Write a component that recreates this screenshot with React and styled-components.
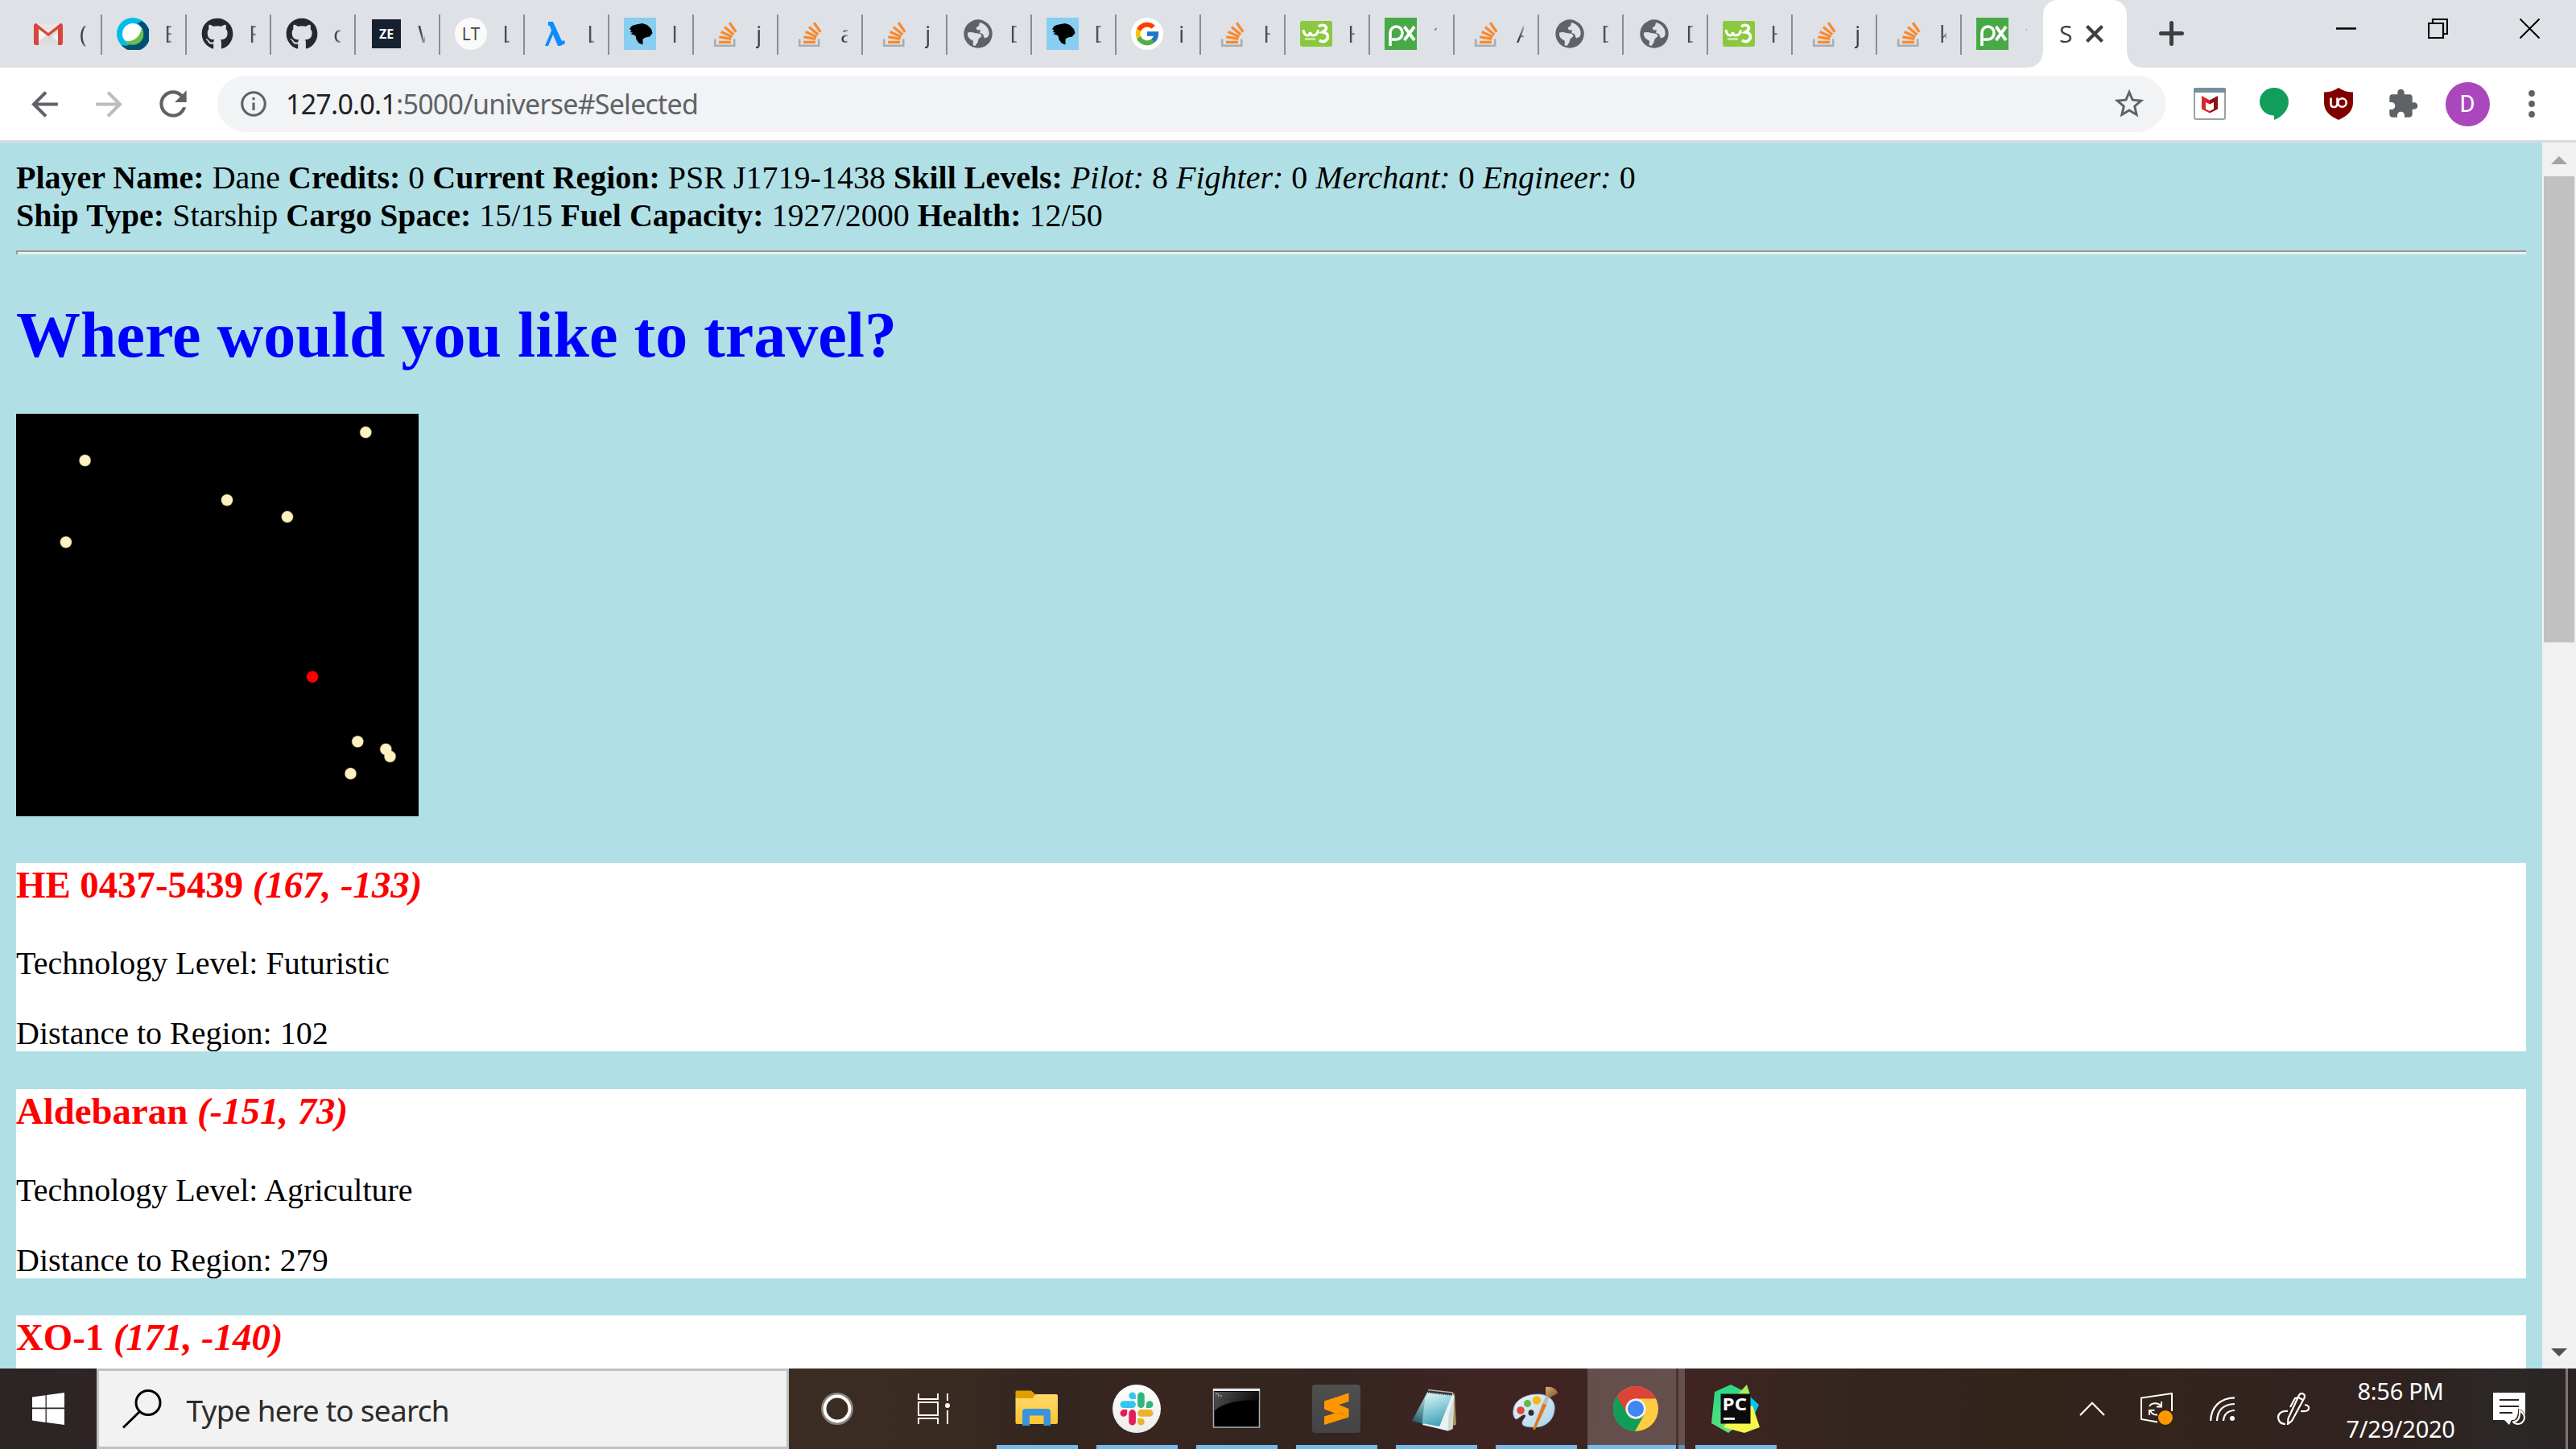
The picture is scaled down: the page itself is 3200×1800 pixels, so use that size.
import React from "react";
import styled, { createGlobalStyle, css } from "styled-components";
import { FaGithub } from "react-icons/fa";
import { FcGoogle } from "react-icons/fc";

const UI_FONT = '"Noto Sans", "Open Sans", sans-serif';
const SERIF = '"Liberation Serif", "Times New Roman", serif';

const GlobalStyle = createGlobalStyle`
  html, body { margin: 0; padding: 0; background: #b0e0e6; }
  body { overflow: hidden; }
  *, *::before, *::after { box-sizing: border-box; }
  svg { display: block; flex: none; }
`;

const Desktop = styled.div`
  display: flex;
  flex-direction: column;
  width: 3200px;
  height: 1800px;
  overflow: hidden;
  font-family: ${UI_FONT};
`;

/* ---------- Tab strip ---------- */

const TabStrip = styled.div`
  display: flex;
  flex: none;
  height: 84px;
  padding-left: 22px;
  background: #dee1e6;
`;

const Tab = styled.div`
  display: flex;
  flex: none;
  align-items: center;
  gap: 19px;
  width: 105px;
  height: 50px;
  margin-top: 18px;
  padding: 0 0 2px 18px;
  border-right: 2px solid ${(p) => (p.$last ? "transparent" : "#8a8d91")};
`;

const TabLabel = styled.span`
  width: ${(p) => p.$clip}px;
  overflow: hidden;
  white-space: nowrap;
  font-family: "Open Sans", sans-serif;
  font-size: 30px;
  line-height: 44px;
  color: #3c4043;
  mask-image: linear-gradient(90deg, #000 35%, rgba(0, 0, 0, 0.35));
`;

const Flare = styled.div`
  flex: none;
  width: 18px;
  height: 20px;
  margin-top: 64px;
  margin-left: ${(p) => (p.$side === "left" ? "-22px" : "0")};
  background: radial-gradient(
    ellipse 18px 20px at ${(p) => (p.$side === "left" ? "0 0" : "100% 0")},
    transparent 97%,
    #fff 100%
  );
`;

const ActiveTab = styled.div`
  display: flex;
  flex: none;
  align-items: center;
  gap: 18px;
  width: 104px;
  height: 84px;
  padding: 0 0 1px 20px;
  border-radius: 18px 18px 0 0;
  background: #fff;
  font-size: 30px;
  color: #3c4043;
`;

const ActiveLabel = styled.span`
  width: 15px;
  font-family: "Open Sans", sans-serif;
  line-height: 44px;
`;

const NewTab = styled.div`
  display: flex;
  align-items: center;
  margin-left: 22px;
  padding-bottom: 1px;
`;

const WindowControls = styled.div`
  display: flex;
  margin-left: auto;
`;

const WindowButton = styled.div`
  display: flex;
  align-items: center;
  justify-content: center;
  width: 114px;
  height: 71px;
  padding-right: 1px;
`;

/* ---------- Favicons with lettering ---------- */

const LetterIcon = styled.span`
  display: flex;
  flex: none;
  align-items: center;
  justify-content: center;
  width: 40px;
  height: 40px;
  line-height: 1;
  ${(p) =>
    p.$kind === "ze" &&
    css`
      width: 36px;
      height: 36px;
      margin: 0 2px;
      background: #17202e;
      color: #fff;
      font: 700 16px/1 "Open Sans", sans-serif;
    `}
  ${(p) =>
    p.$kind === "lt" &&
    css`
      border-radius: 50%;
      background: #fafafa;
      color: #444;
      font: 400 21px/1 "Open Sans", sans-serif;
    `}
`;

/* ---------- Toolbar ---------- */

const Toolbar = styled.div`
  display: flex;
  flex: none;
  align-items: center;
  height: 93px;
  padding: 0 15px;
  background: #fff;
  border-bottom: 3px solid #dadce0;
`;

const ToolButton = styled.div`
  display: flex;
  flex: none;
  align-items: center;
  justify-content: center;
  width: 80px;
  height: 80px;
`;

const Omnibox = styled.div`
  display: flex;
  flex: none;
  align-items: center;
  width: 2420px;
  height: 70px;
  margin: 0 15px;
  padding: 0 23px 0 26px;
  border-radius: 35px;
  background: #f1f3f4;
`;

const Url = styled.span`
  flex: 1;
  margin-left: 21px;
  font-size: 34px;
  line-height: 48px;
  letter-spacing: -0.77px;
  color: #5f6368;
  white-space: nowrap;
`;

const Host = styled.span`
  color: #202124;
`;

const Avatar = styled.span`
  display: flex;
  align-items: center;
  justify-content: center;
  width: 55px;
  height: 55px;
  border-radius: 50%;
  background: #ab47bc;
  color: #fff;
  font: 400 29px/1 Roboto, sans-serif;
`;

/* ---------- Web page ---------- */

const Content = styled.div`
  display: flex;
  flex: none;
  height: 1523px;
  overflow: hidden;
`;

const Page = styled.main`
  flex: 1;
  padding: 20px;
  overflow: hidden;
  background: #b0e0e6;
  color: #000;
  font-family: ${SERIF};
  font-size: 40px;
  line-height: 47px;
`;

const Rule = styled.hr`
  height: 5px;
  margin: 20px 0 0;
  border: 0;
  border-top: 2px solid #9a9a9a;
  border-left: 2px solid #9a9a9a;
  background: #eeeeee;
`;

const Title = styled.h1`
  margin: 54.6px 0 52.8px;
  font-size: 80px;
  line-height: 91px;
  font-weight: 700;
  color: #0000ff;
`;

const MapRow = styled.div`
  height: 510.4px;
`;

const Region = styled.section`
  height: 234.5px;
  margin-top: 46.9px;
  background: #fff;
`;

const RegionName = styled.h3`
  margin: 0 0 46.8px;
  padding-top: 1px;
  font-size: 46.8px;
  line-height: 53.7px;
  font-weight: 700;
  color: #ff0000;
`;

const Fact = styled.p`
  margin: 0;
  & + & {
    margin-top: 40px;
  }
`;

const Scrollbar = styled.div`
  display: flex;
  flex: none;
  flex-direction: column;
  align-items: center;
  width: 42px;
  background: #f1f1f1;
`;

const ScrollArrow = styled.div`
  width: 0;
  height: 0;
  border-left: 10.5px solid transparent;
  border-right: 10.5px solid transparent;
  ${(p) =>
    p.$dir === "up"
      ? css`
          margin: 17px 0 15px;
          border-bottom: 10px solid #a3a3a3;
        `
      : css`
          margin: auto 0 15px;
          border-top: 10px solid #505050;
        `}
`;

const Thumb = styled.div`
  width: 38px;
  height: 579px;
  background: #c1c1c1;
`;

/* ---------- Taskbar ---------- */

const Taskbar = styled.div`
  display: flex;
  flex: none;
  height: 100px;
  background: linear-gradient(
    90deg,
    #2c2523 0,
    #2e2425 120px,
    #3b2d23 980px,
    #3a2b22 1180px,
    #33261f 1300px,
    #38261f 1430px,
    #33251f 1650px,
    #3f2423 1830px,
    #3f2421 1950px,
    #3e2521 2130px,
    #34261f 2300px,
    #30241b 2520px,
    #33241d 2700px,
    #2f2220 2980px,
    #2b2827 3120px,
    #2a2324 3200px
  );
`;

const StartButton = styled.div`
  display: flex;
  align-items: center;
  justify-content: center;
  width: 120px;
`;

const SearchBox = styled.div`
  display: flex;
  align-items: center;
  width: 860px;
  padding-left: 28px;
  border: 3px solid #c1c1c1;
  background: #f2f2f2;
  color: #2b2b2b;
`;

const SearchText = styled.span`
  margin-left: 30.5px;
  padding-top: 3px;
  font-size: 37px;
  line-height: 50px;
  letter-spacing: -0.75px;
  white-space: nowrap;
`;

const ShellButton = styled.div`
  display: flex;
  align-items: center;
  justify-content: center;
  width: 120px;
`;

const AppList = styled.div`
  display: flex;
  margin-left: 6px;
`;

const AppButton = styled.div`
  display: flex;
  flex-direction: column;
  align-items: center;
  width: 124px;
  ${(p) =>
    p.$active &&
    css`
      width: 110px;
      margin-left: 2px;
      padding-left: 10px;
      background: rgba(255, 255, 255, 0.2);
      box-shadow: inset 0 -5px 0 #76b9ed;
    `}
`;

const AppIcon = styled.div`
  display: flex;
  flex: none;
  align-items: center;
  justify-content: center;
  width: 100px;
  height: 95px;
  padding-top: 5px;
`;

const Underline = styled.div`
  width: 101px;
  height: 5px;
  background: #76b9ed;
`;

const StackedWindow = styled.div`
  width: 11px;
  margin-right: 1px;
  border-left: 3px solid rgba(255, 255, 255, 0.06);
  background: rgba(255, 255, 255, 0.2);
  background-clip: padding-box;
  box-shadow: inset 0 -5px 0 #5b93bf;
`;

const SublimeTile = styled.div`
  display: flex;
  align-items: center;
  justify-content: center;
  width: 60px;
  height: 60px;
  border-radius: 4px;
  background: linear-gradient(#4f4f4f, #434343);
`;

const Tray = styled.div`
  display: flex;
  margin-left: auto;
  color: #fff;
`;

const TrayCell = styled.div`
  display: flex;
  align-items: center;
  justify-content: center;
  width: ${(p) => p.$w}px;
`;

const Clock = styled.div`
  width: 174px;
  padding-top: 5px;
  text-align: center;
  font-size: 29px;
  line-height: 46.7px;
  letter-spacing: -0.3px;
`;

const ShowDesktop = styled.div`
  width: 13px;
  margin-left: 22px;
  border-left: 3px solid #7d7674;
`;

/* ---------- Drawings ---------- */

const Glyph = ({ d, size, color = "#5f6368" }) => (
  <svg width={size} height={size} viewBox="0 0 24 24" fill={color}>
    <path d={d} />
  </svg>
);

const BACK = "M20 11H7.83l5.59-5.59L12 4l-8 8 8 8 1.41-1.41L7.83 13H20v-2z";
const FORWARD = "M12 4l-1.41 1.41L16.17 11H4v2h12.17l-5.58 5.59L12 20l8-8z";
const RELOAD =
  "M17.65 6.35C16.2 4.9 14.21 4 12 4c-4.42 0-7.99 3.58-7.99 8s3.57 8 7.99 8c3.73 0 6.84-2.55 7.73-6h-2.08c-.82 2.33-3.04 4-5.65 4-3.31 0-6-2.69-6-6s2.69-6 6-6c1.66 0 3.14.69 4.22 1.78L13 11h7V4l-2.35 2.35z";
const INFO =
  "M11 7h2v2h-2zm0 4h2v6h-2zm1-9C6.48 2 2 6.48 2 12s4.48 10 10 10 10-4.48 10-10S17.52 2 12 2zm0 18c-4.41 0-8-3.59-8-8s3.59-8 8-8 8 3.59 8 8-3.59 8-8 8z";
const STAR =
  "M22 9.24l-7.19-.62L12 2 9.19 8.63 2 9.24l5.46 4.73L5.82 21 12 17.27 18.18 21l-1.63-7.03L22 9.24zM12 15.4l-3.76 2.27 1-4.28-3.32-2.88 4.38-.38L12 6.1l1.71 4.04 4.38.38-3.32 2.88 1 4.28L12 15.4z";
const PUZZLE =
  "M20.5 11H19V7c0-1.1-.9-2-2-2h-4V3.5C13 2.12 11.88 1 10.5 1S8 2.12 8 3.5V5H4c-1.1 0-1.99.9-1.99 2v3.8H3.5c1.49 0 2.7 1.21 2.7 2.7s-1.21 2.7-2.7 2.7H2V20c0 1.1.9 2 2 2h3.8v-1.5c0-1.49 1.21-2.7 2.7-2.7 1.49 0 2.7 1.21 2.7 2.7V22H17c1.1 0 2-.9 2-2v-4h1.5c1.38 0 2.5-1.12 2.5-2.5S21.88 11 20.5 11z";

const Fav = ({ children }) => (
  <svg width="40" height="40" viewBox="0 0 40 40">
    {children}
  </svg>
);

const favicons = {
  gmail: (
    <Fav>
      <path d="M4 8h32v25H4z" fill="#f2f2f2" />
      <path d="M4 33l16-14 16 14z" fill="#dcdcdc" />
      <path d="M8 8h24L20 18z" fill="#e9e4e2" />
      <path d="M20 19L36 9v6L20 27z" fill="#c9c9c9" opacity=".5" />
      <path d="M2 10q0-3 3-3l15 12L35 7q3 0 3 3v21q0 3-3 3h-3V14L20 23 8 14v20H5q-3 0-3-3z" fill="#d8453a" />
    </Fav>
  ),
  webex: (
    <Fav>
      <circle cx="20" cy="20" r="20" fill="#00bceb" />
      <path d="M31 4a20 20 0 1 1-26 29c7 5 22-2 24-14 1-6 0-10-3-12z" fill="#005073" />
      <circle cx="20" cy="20" r="13" fill="#fff" />
      <path d="M31 13a13 13 0 0 1-22 15c9 4 20-3 22-15z" fill="#6abf4b" />
    </Fav>
  ),
  github: <FaGithub size={40} color="#24292e" />,
  ze: <LetterIcon $kind="ze">ZE</LetterIcon>,
  lt: <LetterIcon $kind="lt">LT</LetterIcon>,
  lambda: (
    <Fav>
      <path d="M11 5h6l11 24 3-1 1 4-6 3h-3l-6-14-6 14H7l8-19-2-6h-2z" fill="#0d8bff" />
    </Fav>
  ),
  head: (
    <Fav>
      <rect width="40" height="40" fill="#87cef0" />
      <path
        d="M7 14l3-4 5-1.500 8-1.500 6 2 5 5 1.500 5-3.500 4.500-5 1-3.500 2v7l-5-2-3-4.500-1-4.500-3-1.500-3-.5 2.500-2-3.500-.5 2-2z"
        fill="#000"
      />
    </Fav>
  ),
  stack: (
    <Fav>
      <path d="M8.2 26.5v8.3h24v-8.3" fill="none" stroke="#a7adb3" strokeWidth="2.6" />
      <g stroke="#f98a2b" strokeWidth="3.3">
        <path d="M13 30.3h15M13.3 23.8l15 2.6M15.6 17.4l13.8 6.3M20 11.6l11.3 9.3M26.2 6.2l8 11.6" />
      </g>
    </Fav>
  ),
  globe: (
    <Fav>
      <circle cx="20" cy="20" r="17.700" fill="#5f6368" />
      <path d="M22 6q7 1.500 10.500 8 2.500 6-.5 10l-4 1.500-2-5-4-2 1-3.500-4 .5-1.500-3 3.500-2.500z" fill="#dee1e6" />
      <path d="M7 18.500q5-1 9 .5l7 1 1.500 3-4 3.500-1 4-3 4.500-3-1 .5-5-4.500-3q-3-3-2.500-7.500z" fill="#dee1e6" />
    </Fav>
  ),
  google: (
    <Fav>
      <circle cx="20" cy="20" r="20" fill="#fff" />
      <FcGoogle x="3" y="3" size={34} />
    </Fav>
  ),
  w3: (
    <Fav>
      <rect y="4" width="40" height="32" rx="3" fill="#8bc83f" />
      <path d="M4 15q1 7 5 7 3 0 3.500-4 .5 4 4 4 5 0 6-7" fill="none" stroke="#fff" strokeWidth="3" />
      <path d="M23 11q4-3 8-1 4 4-3 8 8 1 6 8-4 6-10 2" fill="none" stroke="#fff" strokeWidth="3.600" />
      <path d="M6 26.500h13" stroke="#e4f3cf" strokeWidth="2" />
    </Fav>
  ),
  px: (
    <Fav>
      <rect width="40" height="40" fill="#48a947" />
      <path d="M7 35V19a7.500 8 0 1 1 7.500 8H9" fill="none" stroke="#fff" strokeWidth="3.600" />
      <path d="M24.500 11L37 28M37 11L24.500 28" stroke="#fff" strokeWidth="3.800" />
    </Fav>
  ),
};

const WindowsLogo = () => (
  <svg width="40" height="40" viewBox="0 0 40 40" fill="#fff">
    <path d="M0 5.600L16.500 3.300V18.600H0zM17.800 3.100L40 0v18.600H17.800zM0 20.200h16.500V37L0 34.600zM17.800 20.200H40V40l-22.200-2.900z" />
  </svg>
);

const SlackIcon = () => (
  <svg width="60" height="60" viewBox="0 0 60 60">
    <defs>
      <linearGradient id="slackBg" x2="0" y2="1">
        <stop stopColor="#fff" />
        <stop offset="1" stopColor="#ececec" />
      </linearGradient>
    </defs>
    <circle cx="30" cy="30" r="30" fill="url(#slackBg)" />
    <g transform="translate(9.500 9.500) scale(1.710)">
      <path fill="#e01e5a" d="M5.042 15.165a2.528 2.528 0 0 1-2.52 2.523A2.528 2.528 0 0 1 0 15.165a2.527 2.527 0 0 1 2.522-2.52h2.52v2.52zM6.313 15.165a2.527 2.527 0 0 1 2.521-2.520 2.527 2.527 0 0 1 2.521 2.520v6.313A2.528 2.528 0 0 1 8.834 24a2.528 2.528 0 0 1-2.521-2.522v-6.313z" />
      <path fill="#36c5f0" d="M8.834 5.042a2.528 2.528 0 0 1-2.521-2.520A2.528 2.528 0 0 1 8.834 0a2.528 2.528 0 0 1 2.521 2.522v2.520H8.834zM8.834 6.313a2.528 2.528 0 0 1 2.521 2.521 2.528 2.528 0 0 1-2.521 2.521H2.522A2.528 2.528 0 0 1 0 8.834a2.528 2.528 0 0 1 2.522-2.521h6.312z" />
      <path fill="#2eb67d" d="M18.956 8.834a2.528 2.528 0 0 1 2.522-2.521A2.528 2.528 0 0 1 24 8.834a2.528 2.528 0 0 1-2.522 2.521h-2.522V8.834zM17.688 8.834a2.528 2.528 0 0 1-2.523 2.521 2.527 2.527 0 0 1-2.520-2.521V2.522A2.527 2.527 0 0 1 15.165 0a2.528 2.528 0 0 1 2.523 2.522v6.312z" />
      <path fill="#ecb22e" d="M15.165 18.956a2.528 2.528 0 0 1 2.523 2.522A2.528 2.528 0 0 1 15.165 24a2.527 2.527 0 0 1-2.520-2.522v-2.522h2.520zM15.165 17.688a2.527 2.527 0 0 1-2.520-2.523 2.526 2.526 0 0 1 2.520-2.520h6.313A2.527 2.527 0 0 1 24 15.165a2.528 2.528 0 0 1-2.522 2.523h-6.313z" />
    </g>
  </svg>
);

const ExplorerIcon = () => (
  <svg width="60" height="60" viewBox="0 0 60 60">
    <defs>
      <linearGradient id="folder" x2="0" y2="1">
        <stop stopColor="#ffd96b" />
        <stop offset="1" stopColor="#fcc433" />
      </linearGradient>
    </defs>
    <path d="M3.500 9q0-1.500 1.500-1.500h18l5 4.500v6H3.500z" fill="#e0a000" />
    <path d="M3.500 17h21l4-5H54q2 0 2 2v33q0 2-2 2H5.500q-2 0-2-2z" fill="url(#folder)" />
    <path d="M12 51V34q0-4 4-4h27q4 0 4 4v17h-8.500V38.500H21V51z" fill="#3a94dc" />
  </svg>
);

const CmdIcon = () => (
  <svg width="60" height="60" viewBox="0 0 60 60">
    <defs>
      <linearGradient id="cmdShine" x2="1" y2=".3">
        <stop stopColor="#555" />
        <stop offset="1" stopColor="#0c0c0c" />
      </linearGradient>
    </defs>
    <rect x="1.500" y="5.500" width="57" height="47.500" fill="#000" stroke="#a9b0b8" strokeWidth="1.500" />
    <path d="M2.500 9h55v11C35 18 12 23 2.500 33z" fill="url(#cmdShine)" />
    <rect x="1" y="5" width="58" height="3" fill="#e6e6e6" />
    <path d="M4 11.500h2.500M7.500 11.500v3M9 14h3" stroke="#aaa" strokeWidth="1.200" />
  </svg>
);

const SublimeGlyph = () => (
  <svg width="60" height="60" viewBox="0 0 60 60">
    <path d="M15 20.500L45.500 10.500v10.500L33 25l12.500 5v10.500L15 50V39.500L28 35.500 15 30.500z" fill="#ff9800" />
    <path d="M28 35.500l17.500 5-9-6.500z" fill="#d97f00" opacity=".45" />
  </svg>
);

const NotepadIcon = () => (
  <svg width="60" height="60" viewBox="0 0 60 60">
    <defs>
      <linearGradient id="noteCover" x1=".3" x2=".6" y2="1">
        <stop stopColor="#d9f2f6" />
        <stop offset=".45" stopColor="#8fcdd9" />
        <stop offset="1" stopColor="#3a9db5" />
      </linearGradient>
      <linearGradient id="noteSide" x1=".5" x2=".3" y2="1">
        <stop stopColor="#b9dde3" />
        <stop offset=".6" stopColor="#58909b" />
        <stop offset="1" stopColor="#1f5763" />
      </linearGradient>
    </defs>
    <path d="M50 10l3 1 2 39-5 1z" fill="#a89255" />
    <path d="M50 12l2.500 2-2 41-6 2.500L13 50l2-8z" fill="#edf1f1" />
    <path d="M52.500 14l-2 41-6 2.500 1-20z" fill="#cdd8da" />
    <path d="M19 9.500L0 45l13.500 4L20 9.500z" fill="url(#noteSide)" />
    <path d="M19.500 9.500L50 13 34 52l-21.500-4 4-32z" fill="url(#noteCover)" />
    <path d="M20 8.500l31 3.500" stroke="#3b3f40" strokeWidth="4.500" strokeDasharray="1 1.400" />
    <path d="M20 6.500l31 3.500" stroke="#aab6b8" strokeWidth="1.400" />
  </svg>
);

const PaintIcon = () => (
  <svg width="60" height="60" viewBox="0 0 60 60">
    <defs>
      <linearGradient id="palette" x2="1" y2="1">
        <stop stopColor="#eef6fc" />
        <stop offset="1" stopColor="#a9d2ea" />
      </linearGradient>
      <linearGradient id="bristle" x2="1" y2="1">
        <stop stopColor="#dcae72" />
        <stop offset="1" stopColor="#7d5127" />
      </linearGradient>
    </defs>
    <path
      d="M31 12c15-1 24 9 22 20-1 12-11 21-24 21-9 0-15-1-16-4-1-5 5-8 4-11-3-3-7 4-12 5-4-4-4-9-2-16 3-8 14-15 28-15z"
      fill="url(#palette)"
      stroke="#86a9bd"
      strokeWidth=".8"
    />
    <ellipse cx="24" cy="35" rx="3.500" ry="3.800" fill="#3a2a22" />
    <circle cx="11" cy="32" r="4.800" fill="#e5473c" />
    <circle cx="19.500" cy="23.500" r="4.500" fill="#63bb46" />
    <circle cx="31" cy="19.500" r="5.200" fill="#fcb614" />
    <path d="M38.500 23l5 2-14 30q-3 3-3-1z" fill="#e07b1c" />
    <path d="M42 14l5 2-4 9-4.500-2z" fill="#b9bec3" />
    <path d="M42 3q7-1 11 2 4 3 4 6l-9.500 5L42 13.500z" fill="url(#bristle)" />
  </svg>
);

const ChromeIcon = () => (
  <svg width="56" height="56" viewBox="0 0 56 56">
    <circle cx="28" cy="28" r="28" fill="#ffcd40" />
    <path d="M3.800 14A28 28 0 0 1 52.200 14a28 28 0 0 1 .6 1.500H28A12.500 12.500 0 0 0 17 34z" fill="#db4437" />
    <path d="M4.500 12.500A28 28 0 0 0 27 56L39 34.500a12.500 12.500 0 0 1-22-0.500z" fill="#0f9d58" />
    <circle cx="28" cy="28" r="12.500" fill="#f1f1f1" />
    <circle cx="28" cy="28" r="10" fill="#4285f4" />
  </svg>
);

const PyCharmIcon = () => (
  <svg width="60" height="60" viewBox="0 0 60 60">
    <defs>
      <linearGradient id="pcGreen" x2=".3" y2="1">
        <stop stopColor="#21d789" />
        <stop offset="1" stopColor="#5fe07a" />
      </linearGradient>
    </defs>
    <path d="M4 9L24 0l16 8-4 40-15 12L0 48z" fill="url(#pcGreen)" />
    <path d="M44 0L30 15l20 4z" fill="#a5ee62" />
    <path d="M46 13l13 12-5 11-10-3z" fill="#07c3f2" />
    <path d="M51 26l9 27-19 7-26-7 12-18z" fill="#f5f84a" />
    <rect x="11.500" y="11.500" width="37" height="37" fill="#0b0b0b" />
    <text x="13.600" y="32" fill="#fff" fontFamily="Open Sans, sans-serif" fontWeight="700" fontSize="21.500" textLength="30.500" lengthAdjust="spacingAndGlyphs">
      PC
    </text>
    <rect x="15" y="41" width="14" height="2.800" fill="#fff" />
  </svg>
);

const SearchIcon = () => (
  <svg width="50" height="50" viewBox="0 0 50 50" fill="none" stroke="#000" strokeWidth="3">
    <circle cx="33" cy="17.500" r="15" />
    <path d="M22.500 28.500L2 48.500" />
  </svg>
);

const CortanaIcon = () => (
  <svg width="40" height="40" viewBox="0 0 40 40" fill="none">
    <circle cx="20" cy="20" r="18.500" stroke="#8c847f" strokeWidth="3" />
    <circle cx="20" cy="20" r="15.500" stroke="#fff" strokeWidth="4" />
  </svg>
);

const TaskViewIcon = () => (
  <svg width="40" height="38" viewBox="0 0 40 38" fill="none" stroke="#fff" strokeWidth="2">
    <path d="M1 0v7h24V0M1 11h24v16H1zM1 38v-7h24v7M37 0v9M37 21v17" />
    <circle cx="37" cy="15" r="3" fill="#fff" stroke="none" />
  </svg>
);

const UpdateIcon = () => (
  <svg width="40" height="40" viewBox="0 0 40 40" fill="none" stroke="#fff" strokeWidth="2">
    <path d="M21 36.500L1 33V6.500L39 1v22" />
    <path d="M11 17c3-5 11-5 15 0M26 11v6.500h-6M11 28v-6h6.500M12 22c2 5 5 6 9 5.500" />
    <circle cx="31" cy="31" r="9" fill="#ff9800" stroke="none" />
  </svg>
);

const WifiIcon = () => (
  <svg width="32" height="30" viewBox="0 0 32 30" fill="none" stroke="#fff" strokeWidth="2.200">
    <path d="M1.200 30C1.500 13 13 1.500 31 1.300" />
    <path d="M9 30C9.500 17 17 9.500 31 9" />
    <path d="M17 30C17.500 22 22 17.500 31 17" />
    <circle cx="28" cy="27" r="3" fill="#fff" stroke="none" />
  </svg>
);

const PenIcon = () => (
  <svg width="40" height="40" viewBox="0 0 40 40" fill="none" stroke="#fff" strokeWidth="2.200">
    <path d="M27 3q2-3 5-1.500t1.500 5L18 35l-5 4 .5-7zM25.500 5.500l7 4M26 6l-4 1-6 11" />
    <path d="M13 23C4 22 1 27 1 31q1 8 9 8M34 15q6 1 5 5-1 4-10 3" />
  </svg>
);

const ActionCenterIcon = () => (
  <svg width="40" height="40" viewBox="0 0 40 40">
    <path d="M0 0h40v34H23l-3 6-6-6H0z" fill="#fff" />
    <path d="M8 9h24M8 17h24M8 25h16" stroke="#2f2523" strokeWidth="2.200" />
    <path d="M31 20q10 3 9.500 12-2 8-10 9-8-1-9-6 10 0 9.500-15z" fill="#2f2523" />
    <path d="M33 22.500q6 3 6 9-1.500 7-8 7.500-4 0-6-2.500 9-1 8-14z" fill="#2f2523" stroke="#fff" strokeWidth="2" />
  </svg>
);

const McAfeeIcon = () => (
  <svg width="40" height="40" viewBox="0 0 40 40">
    <rect x="1" y="1" width="38" height="38" rx="2" fill="#fff" stroke="#9aa1a6" strokeWidth="2" />
    <path d="M0 2q0-2 2-2h36q2 0 2 2v4H0z" fill="#78909c" />
    <path d="M10 10l10 5.500v5L15 18v8.500l5 2.500v2.500l-10-5z" fill="#d7262c" />
    <path d="M30 10l-10 5.500v5l5-2.500v8.500L20 29v2.500l10-5z" fill="#8d1014" />
  </svg>
);

const HangoutsIcon = () => (
  <svg width="40" height="40" viewBox="0 0 40 40">
    <path d="M20 0a18 17.500 0 0 1 18 17.500C38 28 29 37 20 40v-5.500A18 17.200 0 0 1 20 0z" fill="#129e5a" />
  </svg>
);

const UBlockIcon = () => (
  <svg width="40" height="40" viewBox="0 0 40 40">
    <path d="M20 0q8 5.500 18 5.500V18c0 11-7 17-18 22C9 35 2 29 2 18V5.500Q12 5.500 20 0z" fill="#800000" />
    <path d="M10.500 12.500v7.500q0 4 4 4 3.500 0 4-4v-7.500" fill="none" stroke="#fff" strokeWidth="2.600" />
    <circle cx="24.500" cy="18.500" r="5.200" fill="none" stroke="#fff" strokeWidth="2.600" />
  </svg>
);

const StarMap = ({ stars }) => (
  <svg width="500" height="500" viewBox="0 0 500 500">
    <rect width="500" height="500" fill="#000" />
    {stars.map(([x, y, here]) => (
      <circle key={`${x}-${y}`} cx={x} cy={y} r="7" fill={here ? "#ff0000" : "#fff2be"} stroke={here ? "#ff0000" : "#fff2be"} strokeOpacity=".3" strokeWidth="1.500" />
    ))}
  </svg>
);

/* ---------- Data ---------- */

const tabs = [
  ["gmail", "("], ["webex", "E"], ["github", "F"], ["github", "c"], ["ze", "W"], ["lt", "L"],
  ["lambda", "L"], ["head", "I"], ["stack", "j"], ["stack", "a"], ["stack", "j"], ["globe", "D"],
  ["head", "D"], ["google", "i"], ["stack", "H"], ["w3", "H"], ["px", "1", 6], ["stack", "A"],
  ["globe", "D"], ["globe", "D"], ["w3", "H"], ["stack", "j"], ["stack", "k"], ["px", "1", 4],
];

const stars = [
  [434.300, 23.100], [85.600, 58], [262, 107.200], [336.900, 128.100], [61.900, 159.500],
  [368.200, 326.800, true], [424.300, 407.200], [459.300, 416.800], [464.500, 425.700], [415.500, 447],
];

const regions = [
  { name: "HE 0437-5439", at: "(167, -133)", tech: "Futuristic", distance: 102 },
  { name: "Aldebaran", at: "(-151, 73)", tech: "Agriculture", distance: 279 },
  { name: "XO-1", at: "(171, -140)" },
];

const apps = [
  <ExplorerIcon />,
  <SlackIcon />,
  <CmdIcon />,
  <SublimeTile>
    <SublimeGlyph />
  </SublimeTile>,
  <NotepadIcon />,
  <PaintIcon />,
];

export default function App() {
  return (
    <Desktop>
      <GlobalStyle />
      <TabStrip>
        {tabs.map(([icon, label, clip = 9], i) => (
          <Tab key={i} $last={i === tabs.length - 1}>
            {favicons[icon]}
            <TabLabel $clip={clip}>{label}</TabLabel>
          </Tab>
        ))}
        <Flare $side="left" />
        <ActiveTab>
          <ActiveLabel>S</ActiveLabel>
          <svg width="22" height="22" viewBox="0 0 22 22" stroke="#3c4043" strokeWidth="4.200">
            <path d="M1.500 1.500l19 19M20.500 1.500l-19 19" />
          </svg>
        </ActiveTab>
        <Flare $side="right" />
        <NewTab>
          <svg width="31" height="31" viewBox="0 0 31 31" stroke="#3c4043" strokeWidth="5" strokeLinecap="round">
            <path d="M15.500 2.500v26M2.500 15.500h26" />
          </svg>
        </NewTab>
        <WindowControls>
          <WindowButton>
            <svg width="25" height="25" viewBox="0 0 25 25"><path d="M0 11.200h25v2.500H0z" /></svg>
          </WindowButton>
          <WindowButton>
            <svg width="25" height="25" viewBox="0 0 25 25" fill="none" stroke="#000" strokeWidth="2.200">
              <path d="M1 6h18v18H1zM6 6V1h18v18h-5" />
            </svg>
          </WindowButton>
          <WindowButton>
            <svg width="25" height="25" viewBox="0 0 25 25" stroke="#000" strokeWidth="2">
              <path d="M.500.500l24 24M24.500.500l-24 24" />
            </svg>
          </WindowButton>
        </WindowControls>
      </TabStrip>

      <Toolbar>
        <ToolButton><Glyph d={BACK} size={49} /></ToolButton>
        <ToolButton><Glyph d={FORWARD} size={49} color="#babcbe" /></ToolButton>
        <ToolButton><Glyph d={RELOAD} size={50} /></ToolButton>
        <Omnibox>
          <Glyph d={INFO} size={38} />
          <Url><Host>127.0.0.1</Host>:5000/universe#Selected</Url>
          <Glyph d={STAR} size={44} />
        </Omnibox>
        <ToolButton><McAfeeIcon /></ToolButton>
        <ToolButton><HangoutsIcon /></ToolButton>
        <ToolButton><UBlockIcon /></ToolButton>
        <ToolButton><Glyph d={PUZZLE} size={40} /></ToolButton>
        <ToolButton><Avatar>D</Avatar></ToolButton>
        <ToolButton>
          <svg width="8" height="34" viewBox="0 0 8 34" fill="#5f6368">
            <circle cx="4" cy="4" r="3.900" /><circle cx="4" cy="17" r="3.900" /><circle cx="4" cy="30" r="3.900" />
          </svg>
        </ToolButton>
      </Toolbar>

      <Content>
        <Page>
          <div>
            <b>Player Name:</b> Dane <b>Credits:</b> 0 <b>Current Region:</b> PSR J1719-1438{" "}
            <b>Skill Levels:</b> <i>Pilot:</i> 8 <i>Fighter:</i> 0 <i>Merchant:</i> 0 <i>Engineer:</i> 0
          </div>
          <div>
            <b>Ship Type:</b> Starship <b>Cargo Space:</b> 15/15 <b>Fuel Capacity:</b> 1927/2000 <b>Health:</b> 12/50
          </div>
          <Rule />
          <Title>Where would you like to travel?</Title>
          <MapRow><StarMap stars={stars} /></MapRow>
          {regions.map((r) => (
            <Region key={r.name}>
              <RegionName>{r.name} <i>{r.at}</i></RegionName>
              {r.tech && <Fact>Technology Level: {r.tech}</Fact>}
              {r.distance && <Fact>Distance to Region: {r.distance}</Fact>}
            </Region>
          ))}
        </Page>
        <Scrollbar>
          <ScrollArrow $dir="up" />
          <Thumb />
          <ScrollArrow $dir="down" />
        </Scrollbar>
      </Content>

      <Taskbar>
        <StartButton><WindowsLogo /></StartButton>
        <SearchBox>
          <SearchIcon />
          <SearchText>Type here to search</SearchText>
        </SearchBox>
        <ShellButton><CortanaIcon /></ShellButton>
        <ShellButton><TaskViewIcon /></ShellButton>
        <AppList>
          {apps.map((icon, i) => (
            <AppButton key={i}>
              <AppIcon>{icon}</AppIcon>
              <Underline />
            </AppButton>
          ))}
          <AppButton $active>
            <AppIcon><ChromeIcon /></AppIcon>
          </AppButton>
          <StackedWindow />
          <AppButton>
            <AppIcon><PyCharmIcon /></AppIcon>
            <Underline />
          </AppButton>
        </AppList>
        <Tray>
          <TrayCell $w={80}>
            <svg width="32" height="18" viewBox="0 0 32 18" fill="none" stroke="#fff" strokeWidth="2.200">
              <path d="M1 17L16 1.800 31 17" />
            </svg>
          </TrayCell>
          <TrayCell $w={80}><UpdateIcon /></TrayCell>
          <TrayCell $w={84}><WifiIcon /></TrayCell>
          <TrayCell $w={92}><PenIcon /></TrayCell>
          <Clock>
            <div>8:56 PM</div>
            <div>7/29/2020</div>
          </Clock>
          <TrayCell $w={96}><ActionCenterIcon /></TrayCell>
          <ShowDesktop />
        </Tray>
      </Taskbar>
    </Desktop>
  );
}
